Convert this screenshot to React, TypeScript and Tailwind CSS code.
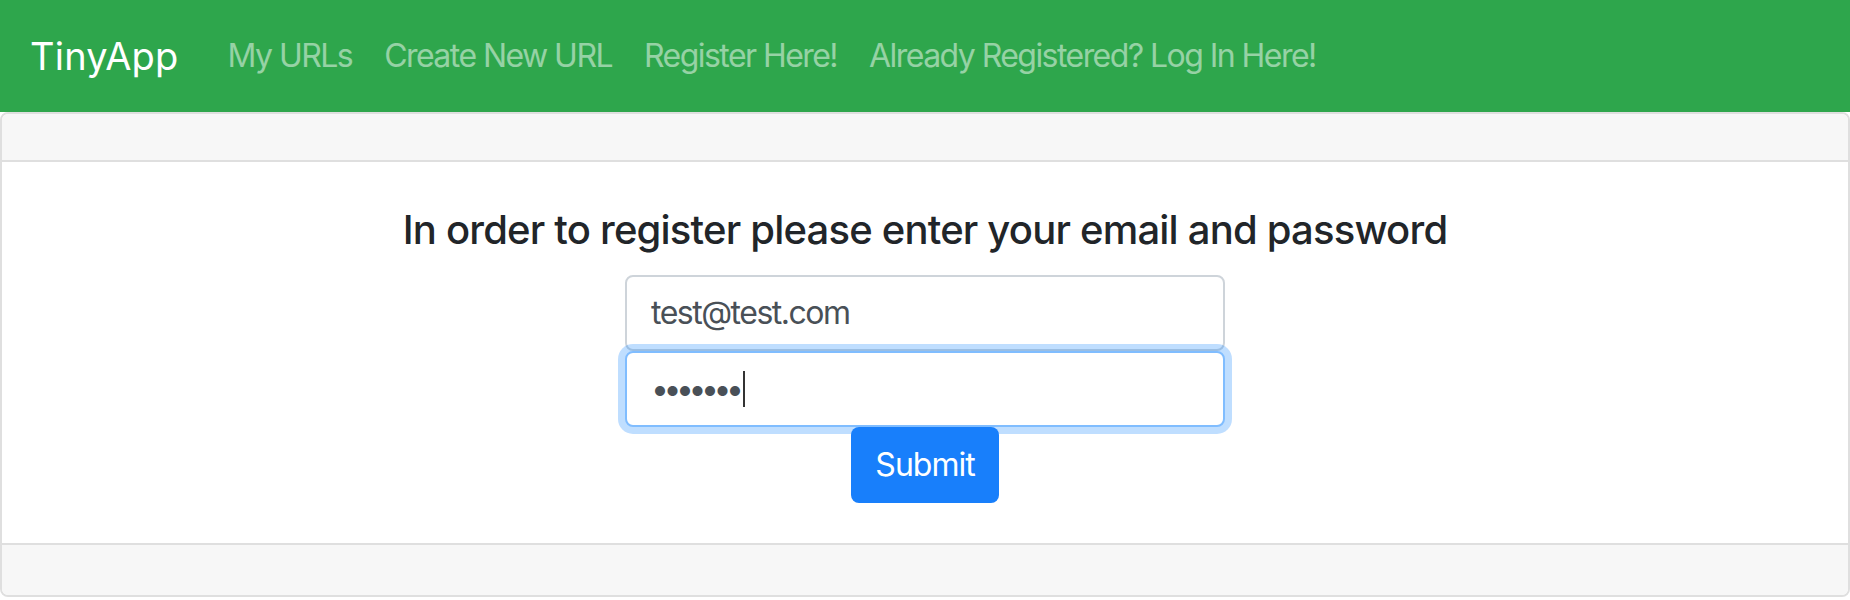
import React from "react";

export default function App() {
  const links = ["My URLs", "Create New URL", "Register Here!", "Already Registered? Log In Here!"];
  return (
    <div className="font-['Inter','Noto_Sans',sans-serif] bg-white w-[1850px] h-[600px] overflow-hidden">
      <nav className="flex items-center h-[112px] pl-[30px] pr-8 bg-[#2ea64c]">
        <span className="text-[38px] leading-[60px] text-white mr-[33px] tracking-[0.2px]">TinyApp</span>
        <div className="flex">
          {links.map((l) => (
            <span key={l} className="px-4 text-[32px] leading-[48px] text-white/50 tracking-[-1.55px]">
              {l}
            </span>
          ))}
        </div>
      </nav>
      <div className="border-2 border-[#dfdfdf] rounded-lg overflow-hidden">
        <div className="h-[48px] bg-[#f7f7f7] border-b-2 border-[#dfdfdf]" />
        <div className="px-10 pt-[44px] pb-10 flex flex-col items-center">
          <h5 className="text-[40px] font-medium leading-[48px] text-[#212529] tracking-[-0.8px]">
            In order to register please enter your email and password
          </h5>
          <form className="w-[600px] mt-[21px] flex flex-col items-center">
            <div className="h-[76px] w-full border-2 border-[#ced4da] rounded-lg px-6 text-[32px] text-[#495057] flex items-center tracking-[-1.5px] bg-white">
              test@test.com
            </div>
            <div className="h-[76px] w-full border-2 border-[#80bdff] rounded-lg px-6 text-[32px] text-[#495057] flex items-center bg-white shadow-[0_0_0_7px_rgba(0,123,255,0.25)]">
              <span className="tracking-[-5.5px]">•••••••</span>
              <span className="w-[2px] h-[36px] bg-[#333] ml-[4px]" />
            </div>
            <button
              type="button"
              className="h-[76px] px-6 rounded-lg bg-[#187ffb] text-white text-[32px] tracking-[-1px]"
            >
              Submit
            </button>
          </form>
        </div>
        <div className="h-[52px] bg-[#f7f7f7] border-t-2 border-[#dfdfdf]" />
      </div>
    </div>
  );
}
